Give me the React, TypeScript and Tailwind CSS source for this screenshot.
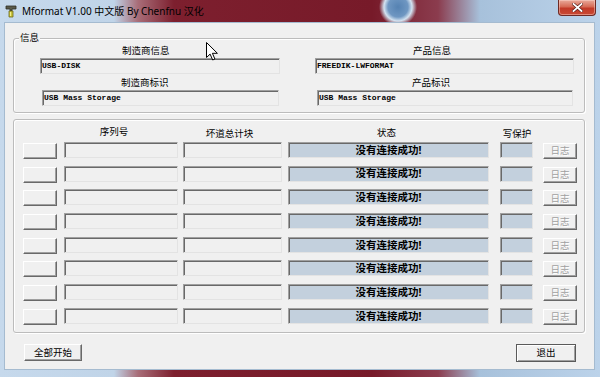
import React from "react";

const sunken =
  "border border-[#e3e3e3] border-t-[#a0a0a0] border-l-[#a0a0a0] shadow-[inset_1px_1px_0_#696969]";
const raised =
  "border border-t-white border-l-white border-b-[#696969] border-r-[#696969] shadow-[inset_-1px_-1px_0_#a0a0a0]";
const groupBox =
  "border border-[#bcbcbc] rounded-[3px] shadow-[inset_1px_1px_0_#fff,1px_1px_0_#fff]";

const InfoField = ({ text, className }: { text: string; className: string }) => (
  <div
    className={`${sunken} ${className} h-[16px] bg-[#f0f0f0] pl-[1px] font-['Liberation_Mono',monospace] text-[8px] font-bold leading-[14px] text-black`}
  >
    {text}
  </div>
);

const Row = () => (
  <div className="flex h-[16px] items-start">
    <div className={`${raised} mt-[1px] h-[16px] w-[34px] bg-[#f0f0f0]`} />
    <div className={`${sunken} ml-[7px] h-[16px] w-[114px] bg-[#f0f0f0]`} />
    <div className={`${sunken} ml-[5px] h-[16px] w-[99px] bg-[#f0f0f0]`} />
    <div
      className={`${sunken} ml-[6px] flex h-[16px] w-[201px] items-center justify-center bg-[#c3d0dd] text-[10.5px] font-bold leading-none text-black`}
    >
      没有连接成功!
    </div>
    <div className={`${sunken} ml-[11px] h-[16px] w-[33px] bg-[#c3d0dd]`} />
    <div
      className={`${raised} ml-[10px] mt-[1px] flex h-[16px] w-[34px] items-center justify-center bg-[#f0f0f0] text-[9.5px] leading-none text-[#a0a0a0] [text-shadow:1px_1px_0_#fff]`}
    >
      日志
    </div>
  </div>
);

const AppIcon = () => (
  <svg width="12" height="13" viewBox="0 0 12 13">
    <path d="M1 1h10v3H7v2H5V4H1z" fill="#5a5a4a" stroke="#2e2e26" strokeWidth="0.8" />
    <path d="M4 6h4v6H4z" fill="#c8c23a" stroke="#6d6a1c" strokeWidth="0.8" />
    <path d="M5 7h1v4H5z" fill="#f1ee8a" />
  </svg>
);

const Cursor = () => (
  <svg width="12" height="19" viewBox="0 0 12 19" className="absolute left-[206px] top-[42px]">
    <path d="M0.5 0.5v15l3.6-3.4 2.6 5.9 2.2-1-2.5-5.7h5z" fill="#fff" stroke="#000" strokeWidth="1" />
  </svg>
);

export default function App() {
  return (
    <div className="relative flex h-[377px] w-[600px] flex-col overflow-hidden bg-[linear-gradient(to_right,#c6d9ec_0%,#c0d4e8_19%,#a86d78_23%,#7d1f2e_29%,#771a29_62%,#8b3c4e_73%,#a7c1db_80%,#bcd3ea_100%)] font-['Noto_Sans','Noto_Sans_CJK_SC',sans-serif]">
      {/* Title bar */}
      <div className="flex h-[22px] items-start bg-[radial-gradient(circle_at_398px_7px,#5582b2_0px,#6f97c2_10px,#d3e2f0_14px,rgba(210,225,240,0)_19px)]">
        <div className="ml-[5px] mt-[5px]">
          <AppIcon />
        </div>
        <div className="ml-[5px] mt-[4px] text-[10px] leading-[14px] text-black">
          Mformat V1.00 中文版 By Chenfnu 汉化
        </div>
        <div className="ml-auto mr-[4px] flex h-[16px] w-[38px] items-center justify-center rounded-b-[4px] border border-t-0 border-[#6e2a25] bg-[linear-gradient(to_bottom,#e9aa9b_0%,#d66a55_45%,#c23a28_55%,#c94a35_100%)] shadow-[inset_0_0_0_1px_rgba(255,220,210,0.45)]">
          <svg width="11" height="9" viewBox="0 0 11 9">
            <path d="M1.5 1l8 7M9.5 1l-8 7" stroke="#5a1f1a" strokeWidth="3.2" strokeLinecap="square" />
            <path d="M1.5 1l8 7M9.5 1l-8 7" stroke="#fff" strokeWidth="1.8" strokeLinecap="square" />
          </svg>
        </div>
      </div>

      {/* Client */}
      <div className="flex flex-1 pb-[7px] pl-[4px] pr-[5px]">
        <div className="flex flex-1 flex-col border border-[#a5bbd0] bg-[#f0f0f0] text-[9.5px] leading-[12px] text-black">
          {/* 信息 group */}
          <div className={`${groupBox} relative ml-[8px] mr-[9px] mt-[15px] h-[75px]`}>
            <div className="absolute left-[5px] top-[-7px] bg-[#f0f0f0] px-[1px] leading-[12px]">信息</div>
            <div className="flex pl-[26px] pt-[6px]">
              <div className="flex w-[240px] flex-col">
                <div className="h-[12px] pl-[82px]">制造商信息</div>
                <InfoField text="USB-DISK" className="mt-[1px] w-[240px]" />
                <div className="mt-[3px] h-[12px] pl-[81px]">制造商标识</div>
                <InfoField text="USB Mass Storage" className="ml-[2px] mt-[1px] w-[237px]" />
              </div>
              <div className="ml-[35px] flex w-[259px] flex-col">
                <div className="h-[12px] pl-[98px]">产品信息</div>
                <InfoField text="FREEDIK-LWFORMAT" className="mt-[1px] w-[259px]" />
                <div className="mt-[3px] h-[12px] pl-[97px]">产品标识</div>
                <InfoField text="USB Mass Storage" className="ml-[2px] mt-[1px] w-[256px]" />
              </div>
            </div>
          </div>

          {/* Devices group */}
          <div className={`${groupBox} ml-[8px] mr-[9px] mt-[6px] h-[214px] pl-[9px] pt-[6px]`}>
            <div className="flex h-[12px] items-start">
              <div className="w-[34px]" />
              <div className="ml-[7px] w-[114px] pr-[14px] text-center">序列号</div>
              <div className="ml-[5px] mt-[2px] w-[99px] pr-[6px] text-center">坏道总计块</div>
              <div className="ml-[6px] mt-[1px] w-[201px] pr-[4px] text-center">状态</div>
              <div className="ml-[8px] mt-[2px] w-[40px] text-center">写保护</div>
            </div>
            <div className="mt-[4px] flex flex-col gap-[7.7px]">
              {Array.from({ length: 8 }).map((_, i) => (
                <Row key={i} />
              ))}
            </div>
          </div>

          {/* Bottom buttons */}
          <div className="ml-[19px] mr-[18px] mt-[11px] flex items-start justify-between">
            <div className={`${raised} flex h-[17px] w-[58px] items-center justify-center bg-[#f0f0f0] leading-none`}>
              全部开始
            </div>
            <div className="flex h-[18px] w-[60px] items-center justify-center border border-[#5a5a5a] bg-[#f0f0f0] leading-none shadow-[inset_1px_1px_0_#fff,inset_-1px_-1px_0_#a0a0a0]">
              退出
            </div>
          </div>
        </div>
      </div>

      <Cursor />
    </div>
  );
}
